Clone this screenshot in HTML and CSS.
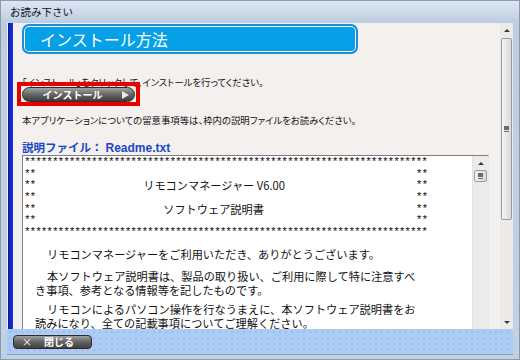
FILE: index.html
```html
<!DOCTYPE html>
<html lang="ja">
<head>
  <meta charset="UTF-8">
  <title>お読み下さい</title>
  <link rel="stylesheet" href="styles.css">
</head>
<body>
  <div class="window">
    <div class="titlebar">お読み下さい</div>
    <div class="client">
      <div class="strip"></div>
      <div class="page">
        <div class="heading">インストール方法</div>
        <p class="lead">「インストール」をクリックして、インストールを行ってください。</p>
        <div class="install-wrap">
          <button class="install">インストール<span class="tri"></span></button>
          <div class="mark"></div>
        </div>
        <p class="note">本アプリケーションについての留意事項等は、枠内の説明ファイルをお読みください。</p>
        <h3 class="file">説明ファイル：<span class="fname">Readme.txt</span></h3>
        <div class="readme">
          <div class="readme-text">
            <div class="stars">************************************************************************</div>
            <div class="row"><span>**</span><span>**</span></div>
            <div class="row"><span>**</span><span class="mid m1">リモコンマネージャー V6.00</span><span>**</span></div>
            <div class="row"><span>**</span><span>**</span></div>
            <div class="row"><span>**</span><span class="mid m2">ソフトウェア説明書</span><span>**</span></div>
            <div class="row"><span>**</span><span>**</span></div>
            <div class="stars">************************************************************************</div>
            <div class="para">
              <div class="ln first">リモコンマネージャーをご利用いただき、ありがとうございます。</div>
            </div>
            <div class="para">
              <div class="ln first">本ソフトウェア説明書は、製品の取り扱い、ご利用に際して特に注意すべ</div>
              <div class="ln cont">き事項、参考となる情報等を記したものです。</div>
            </div>
            <div class="para last">
              <div class="ln first">リモコンによるパソコン操作を行なうまえに、本ソフトウェア説明書をお</div>
              <div class="ln cont">読みになり、全ての記載事項についてご理解ください。</div>
            </div>
          </div>
          <div class="vscroll inner">
            <div class="sb-btn"><span class="arrow up"></span></div>
            <div class="thumb small"><span class="grip"></span></div>
            <div class="track"></div>
          </div>
        </div>
      </div>
      <div class="vscroll outer">
        <div class="sb-btn"><span class="arrow up"></span></div>
        <div class="thumb big"><span class="grip"></span></div>
        <div class="track"></div>
        <div class="sb-btn"><span class="arrow down"></span></div>
      </div>
    </div>
    <div class="footer">
      <button class="close"><span class="x">×</span>閉じる</button>
    </div>
  </div>
</body>
</html>
```

FILE: styles.css
```css
body {
  margin: 0;
  width: 520px;
  height: 360px;
  overflow: hidden;
  font-family: "Noto Sans CJK JP", sans-serif;
}
.window {
  width: 520px;
  height: 360px;
  box-sizing: border-box;
  border: 1px solid #8d99a8;
  background: linear-gradient(#dde7f2, #bccde2 22px, #c2d2e5);
  display: flex;
  flex-direction: column;
}
.titlebar {
  height: 22px;
  padding-left: 9px;
  font-size: 10.5px;
  line-height: 22px;
  color: #111;
}
.client {
  display: flex;
  height: 306px;
  margin: 0 6px;
  border-left: 1px solid #eef3f9;
}
.strip {
  width: 5px;
  background: linear-gradient(to right, #0b1ca8, #1a34d8);
}
.page {
  flex: 1;
  padding-left: 9px;
  background: #f4f0ee;
  overflow: hidden;
}
.heading {
  width: 316px;
  height: 26px;
  margin-top: 1px;
  border: 2px solid #1b8fd6;
  border-radius: 7px;
  box-shadow: inset 0 0 0 1px #fff;
  background: #05a0e6;
  color: #fff;
  font-size: 16px;
  line-height: 26px;
  padding-left: 16px;
  box-sizing: content-box;
}
.lead {
  margin: 21px 0 0;
  font-size: 9.4px;
  line-height: 14px;
  color: #111;
  font-feature-settings: "palt";
}
.install-wrap {
  position: relative;
  width: 113px;
  margin-top: -2px;
}
.install {
  display: flex;
  align-items: center;
  justify-content: center;
  position: relative;
  width: 113px;
  height: 15px;
  padding: 0 12px 0 0;
  border: 1px solid #2e2e2e;
  border-radius: 8px;
  background: linear-gradient(#a4a4a4, #6a6a6a 45%, #3c3c3c);
  color: #fff;
  font-family: "Noto Sans CJK JP", sans-serif;
  font-size: 10px;
  font-weight: bold;
  line-height: 13px;
}
.tri {
  position: absolute;
  right: 5px;
  top: 3px;
  border-left: 7px solid #e8e8e8;
  border-top: 4px solid transparent;
  border-bottom: 4px solid transparent;
}
.mark {
  position: absolute;
  left: -5px;
  top: -5px;
  width: 115px;
  height: 16px;
  border: 4px solid #e60000;
}
.note {
  margin: 11px 0 0;
  font-size: 9.4px;
  line-height: 14px;
  color: #111;
  font-feature-settings: "palt";
}
.file {
  margin: 13px 0 0;
  font-size: 11.5px;
  line-height: 14px;
  color: #1848c6;
  font-weight: bold;
}
.fname {
  font-family: "Liberation Sans", Arial, sans-serif;
  font-size: 12px;
  margin-left: 3px;
}
.readme {
  display: flex;
  width: 465px;
  height: 200px;
  border: 1px solid;
  border-color: #7c7f86 #e6e6e6 #e6e6e6 #7c7f86;
  background: #fff;
}
.readme-text {
  flex: 1;
  padding: 1px 0 0 1px;
  font-size: 11.2px;
  color: #111;
}
.stars, .row {
  width: 403px;
  height: 11.7px;
  line-height: 11.7px;
  white-space: nowrap;
  font-family: "Liberation Mono", monospace;
  letter-spacing: -1.12px;
}
.stars {
  overflow: hidden;
}
.row {
  display: flex;
  justify-content: space-between;
}
.row .mid {
  flex: 1;
  letter-spacing: 0;
  font-family: "Noto Sans CJK JP", sans-serif;
}
.m1 { padding-left: 108px; }
.m2 { padding-left: 128px; }
.para {
  margin-top: 8px;
}
.para.last {
  margin-top: 5px;
}
.ln {
  line-height: 14px;
  white-space: nowrap;
}
.first { padding-left: 23px; }
.cont { padding-left: 11px; }
.vscroll {
  display: flex;
  flex-direction: column;
  background: #eceae8;
}
.vscroll.inner {
  width: 15px;
  border-left: 1px solid #e2e2e2;
  background: #ebebeb;
}
.vscroll.outer {
  width: 13px;
}
.sb-btn {
  height: 14px;
  display: flex;
  align-items: center;
  justify-content: center;
}
.arrow {
  width: 0;
  height: 0;
  border-left: 3px solid transparent;
  border-right: 3px solid transparent;
}
.arrow.up { border-bottom: 3px solid #3a3a3a; }
.arrow.down { border-top: 3px solid #3a3a3a; }
.thumb {
  display: flex;
  align-items: center;
  justify-content: center;
  margin: 0 1px;
  border: 1px solid #9a9a9a;
  border-radius: 2px;
  background: linear-gradient(to right, #f4f4f4, #dadada);
}
.thumb.big { height: 180px; margin-top: 1px; }
.thumb.small { height: 10px; }
.grip {
  width: 5px;
  height: 1px;
  border-top: 1px solid #6a6a6a;
  border-bottom: 1px solid #6a6a6a;
  box-shadow: 0 -3px 0 #6a6a6a;
  margin-top: 2px;
}
.track {
  flex: 1;
}
.footer {
  height: 25px;
  margin: 0 6px;
  border-bottom: 1px solid #8aa0b8;
  background-color: #a7cef7;
  background-image: radial-gradient(circle, #c9a8e2 0.7px, transparent 1px);
  background-size: 6px 6px;
}
.close {
  display: flex;
  align-items: center;
  width: 79px;
  height: 14px;
  margin: 6px 0 0 6px;
  padding: 0 0 0 8px;
  border: 1px solid #2c2c2c;
  border-radius: 4px;
  background: linear-gradient(#a0a0a0, #666 45%, #404040);
  color: #fff;
  font-family: "Noto Sans CJK JP", sans-serif;
  font-size: 10px;
  font-weight: bold;
  line-height: 12px;
}
.close .x {
  font-weight: normal;
  margin-right: 12px;
}
```
